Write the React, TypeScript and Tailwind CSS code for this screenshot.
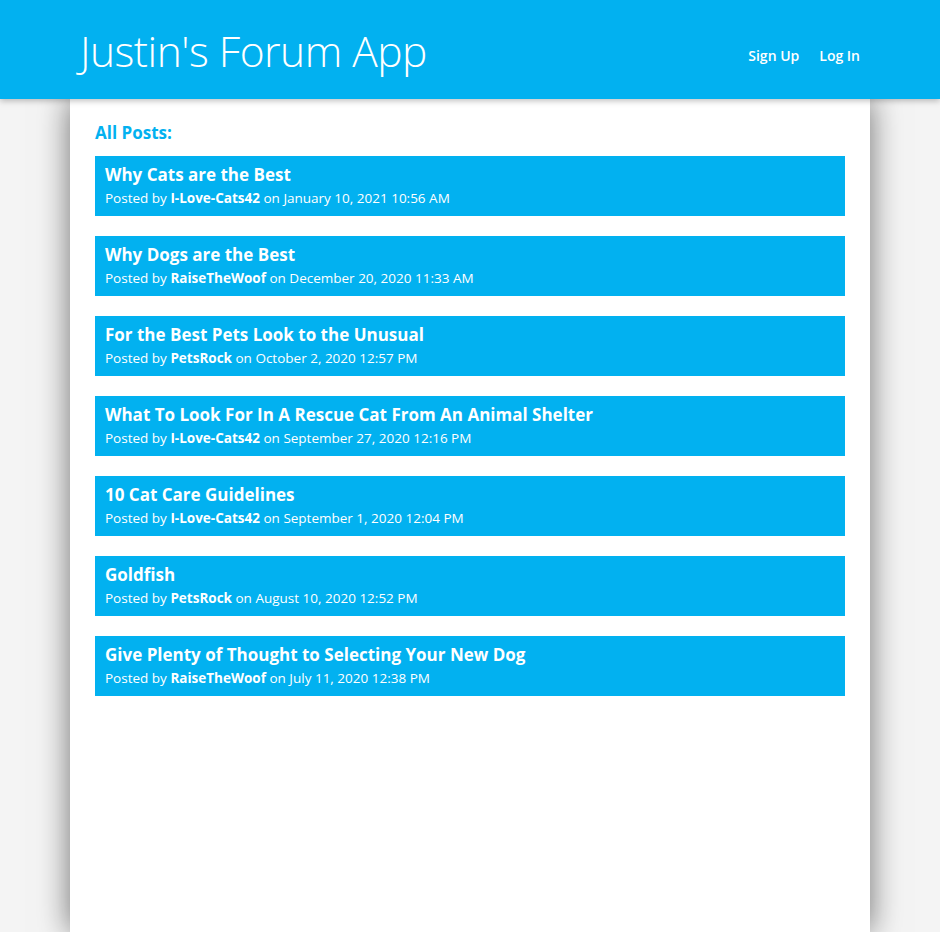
const posts = [
  { title: "Why Cats are the Best", author: "I-Love-Cats42", date: "January 10, 2021 10:56 AM" },
  { title: "Why Dogs are the Best", author: "RaiseTheWoof", date: "December 20, 2020 11:33 AM" },
  { title: "For the Best Pets Look to the Unusual", author: "PetsRock", date: "October 2, 2020 12:57 PM" },
  { title: "What To Look For In A Rescue Cat From An Animal Shelter", author: "I-Love-Cats42", date: "September 27, 2020 12:16 PM" },
  { title: "10 Cat Care Guidelines", author: "I-Love-Cats42", date: "September 1, 2020 12:04 PM" },
  { title: "Goldfish", author: "PetsRock", date: "August 10, 2020 12:52 PM" },
  { title: "Give Plenty of Thought to Selecting Your New Dog", author: "RaiseTheWoof", date: "July 11, 2020 12:38 PM" },
];

export default function App() {
  return (
    <div className="min-h-screen bg-[#f4f4f4] font-['Segoe_UI','Open_Sans',sans-serif] text-white">
      {/* header */}
      <header className="relative z-10 h-[99px] bg-[#02b1f0] shadow-[0_2px_6px_rgba(0,0,0,0.25)]">
        <div className="ml-[80px] mr-[80px] flex h-full items-center justify-between">
          <h1 className="pt-[4px] text-[42.5px] font-light leading-none tracking-[-0.5px]">Justin's Forum App</h1>
          <nav className="flex gap-5 pt-[11px] text-[14px] font-semibold">
            <a>Sign Up</a>
            <a>Log In</a>
          </nav>
        </div>
      </header>

      {/* main */}
      <main className="mx-[70px] min-h-[833px] bg-white px-[25px] pt-[21px] shadow-[0_0_30px_rgba(0,0,0,0.55)]">
        <h2 className="mb-[10px] text-[17px] font-bold text-[#02b1f0]">All Posts:</h2>
        <div className="flex flex-col gap-5">
          {posts.map((p) => (
            <div key={p.title} className="h-[60px] bg-[#02b1f0] px-[10px] pt-[7px]">
              <div className="text-[17px] font-bold leading-[24px]">{p.title}</div>
              <div className="text-[13.5px] leading-[23px]">
                Posted by <span className="font-bold">{p.author}</span> on {p.date}
              </div>
            </div>
          ))}
        </div>
      </main>
    </div>
  );
}
